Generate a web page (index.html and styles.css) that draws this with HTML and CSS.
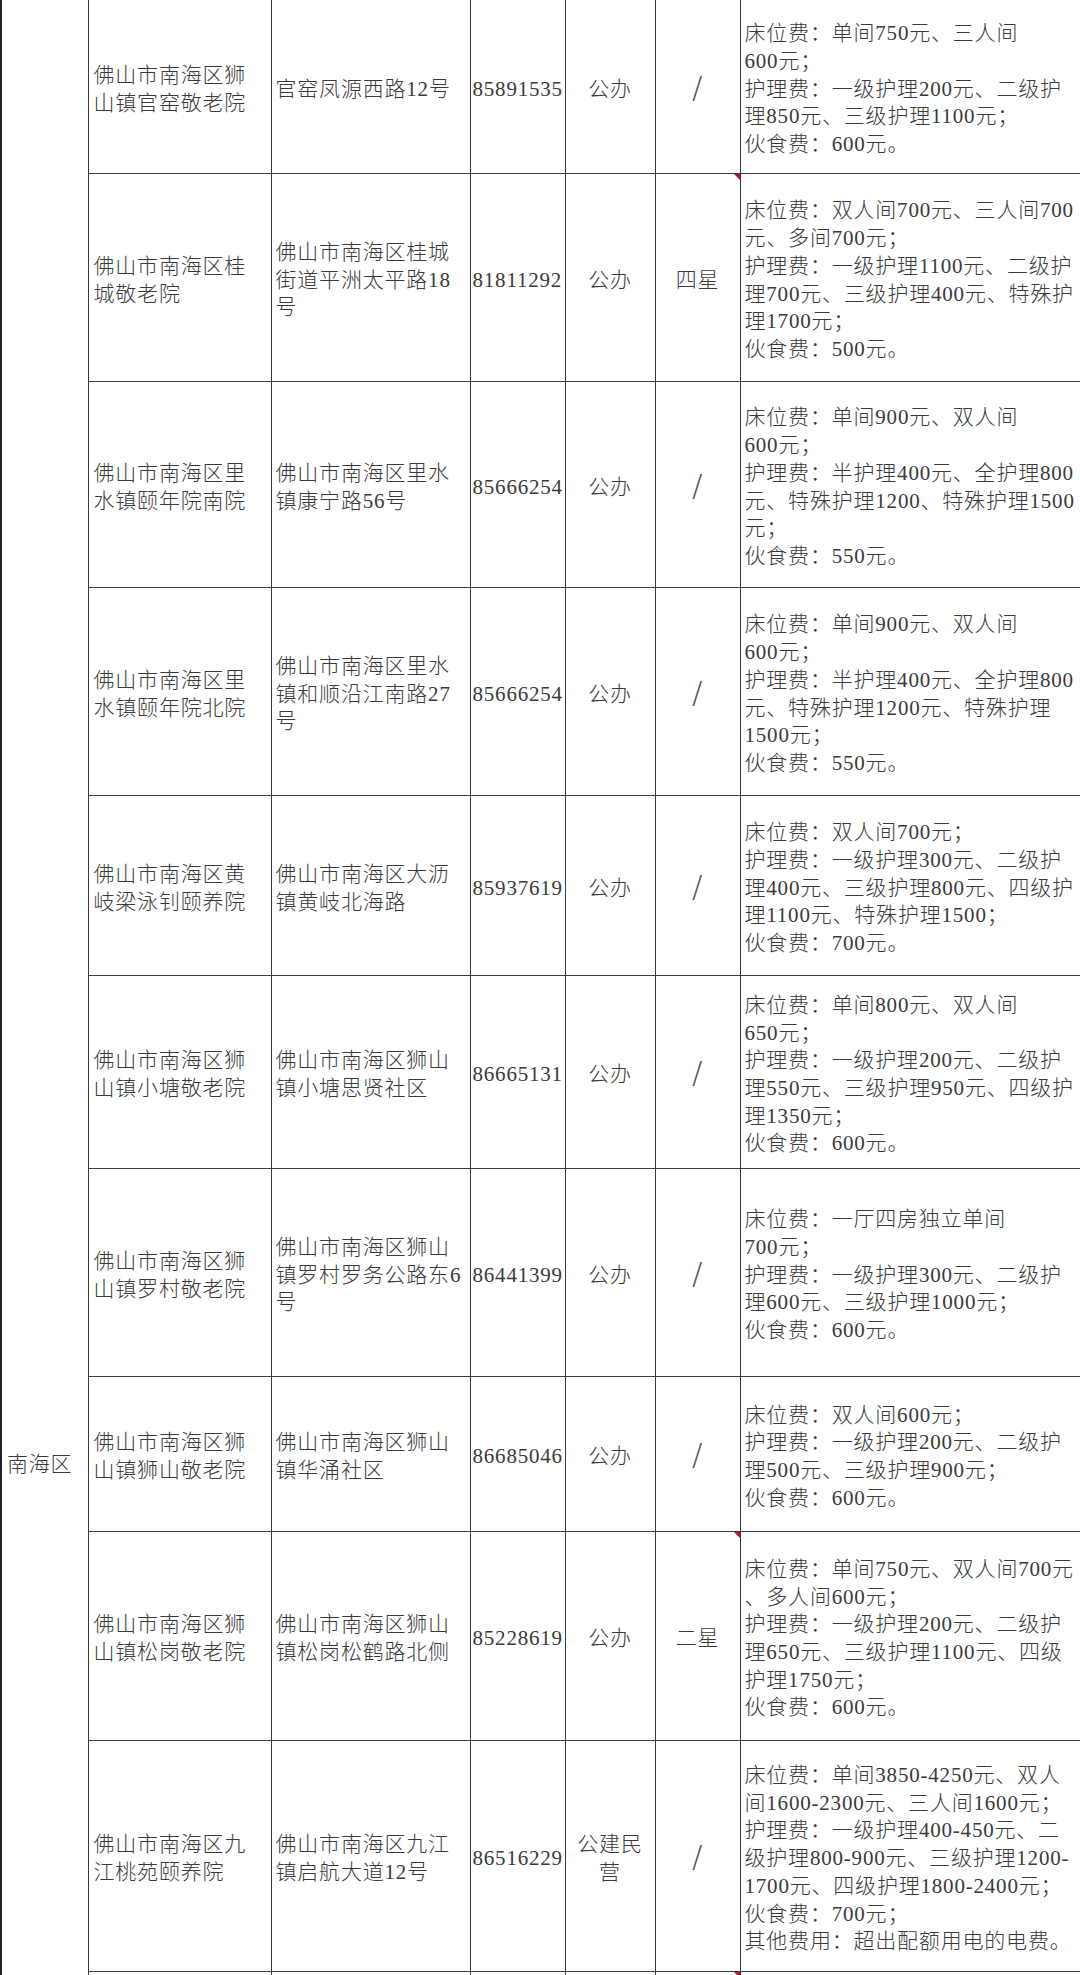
FILE: index.html
```html
<!DOCTYPE html>
<html lang="zh-CN">
<head>
<meta charset="utf-8">
<title>佛山市南海区养老机构收费表</title>
<link rel="stylesheet" href="styles.css">
</head>
<body>
<table class="fees">
  <colgroup>
    <col class="c-dist"><col class="c-name"><col class="c-addr"><col class="c-tel"><col class="c-type"><col class="c-star"><col class="c-fee">
  </colgroup>
  <tbody>
    <tr>
      <td class="dist" rowspan="11">南海区</td>
      <td class="name">佛山市南海区狮<br>山镇官窑敬老院</td>
      <td class="addr">官窑凤源西路12号</td>
      <td class="tel">85891535</td>
      <td class="type">公办</td>
      <td class="star"><span class="slash">/</span></td>
      <td class="fee">床位费：单间750元、三人间<br>600元；<br>护理费：一级护理200元、二级护<br>理850元、三级护理1100元；<br>伙食费：600元。</td>
    </tr>
    <tr>
      <td class="name">佛山市南海区桂<br>城敬老院</td>
      <td class="addr">佛山市南海区桂城<br>街道平洲太平路18<br>号</td>
      <td class="tel">81811292</td>
      <td class="type">公办</td>
      <td class="star mark">四星</td>
      <td class="fee">床位费：双人间700元、三人间700<br>元、多间700元；<br>护理费：一级护理1100元、二级护<br>理700元、三级护理400元、特殊护<br>理1700元；<br>伙食费：500元。</td>
    </tr>
    <tr>
      <td class="name">佛山市南海区里<br>水镇颐年院南院</td>
      <td class="addr">佛山市南海区里水<br>镇康宁路56号</td>
      <td class="tel">85666254</td>
      <td class="type">公办</td>
      <td class="star"><span class="slash">/</span></td>
      <td class="fee">床位费：单间900元、双人间<br>600元；<br>护理费：半护理400元、全护理800<br>元、特殊护理1200、特殊护理1500<br>元；<br>伙食费：550元。</td>
    </tr>
    <tr>
      <td class="name">佛山市南海区里<br>水镇颐年院北院</td>
      <td class="addr">佛山市南海区里水<br>镇和顺沿江南路27<br>号</td>
      <td class="tel">85666254</td>
      <td class="type">公办</td>
      <td class="star"><span class="slash">/</span></td>
      <td class="fee">床位费：单间900元、双人间<br>600元；<br>护理费：半护理400元、全护理800<br>元、特殊护理1200元、特殊护理<br>1500元；<br>伙食费：550元。</td>
    </tr>
    <tr>
      <td class="name">佛山市南海区黄<br>岐梁泳钊颐养院</td>
      <td class="addr">佛山市南海区大沥<br>镇黄岐北海路</td>
      <td class="tel">85937619</td>
      <td class="type">公办</td>
      <td class="star"><span class="slash">/</span></td>
      <td class="fee">床位费：双人间700元；<br>护理费：一级护理300元、二级护<br>理400元、三级护理800元、四级护<br>理1100元、特殊护理1500；<br>伙食费：700元。</td>
    </tr>
    <tr>
      <td class="name">佛山市南海区狮<br>山镇小塘敬老院</td>
      <td class="addr">佛山市南海区狮山<br>镇小塘思贤社区</td>
      <td class="tel">86665131</td>
      <td class="type">公办</td>
      <td class="star"><span class="slash">/</span></td>
      <td class="fee">床位费：单间800元、双人间<br>650元；<br>护理费：一级护理200元、二级护<br>理550元、三级护理950元、四级护<br>理1350元；<br>伙食费：600元。</td>
    </tr>
    <tr>
      <td class="name">佛山市南海区狮<br>山镇罗村敬老院</td>
      <td class="addr">佛山市南海区狮山<br>镇罗村罗务公路东6<br>号</td>
      <td class="tel">86441399</td>
      <td class="type">公办</td>
      <td class="star"><span class="slash">/</span></td>
      <td class="fee">床位费：一厅四房独立单间<br>700元；<br>护理费：一级护理300元、二级护<br>理600元、三级护理1000元；<br>伙食费：600元。</td>
    </tr>
    <tr>
      <td class="name">佛山市南海区狮<br>山镇狮山敬老院</td>
      <td class="addr">佛山市南海区狮山<br>镇华涌社区</td>
      <td class="tel">86685046</td>
      <td class="type">公办</td>
      <td class="star"><span class="slash">/</span></td>
      <td class="fee">床位费：双人间600元；<br>护理费：一级护理200元、二级护<br>理500元、三级护理900元；<br>伙食费：600元。</td>
    </tr>
    <tr>
      <td class="name">佛山市南海区狮<br>山镇松岗敬老院</td>
      <td class="addr">佛山市南海区狮山<br>镇松岗松鹤路北侧</td>
      <td class="tel">85228619</td>
      <td class="type">公办</td>
      <td class="star mark">二星</td>
      <td class="fee">床位费：单间750元、双人间700元<br>、多人间600元；<br>护理费：一级护理200元、二级护<br>理650元、三级护理1100元、四级<br>护理1750元；<br>伙食费：600元。</td>
    </tr>
    <tr>
      <td class="name">佛山市南海区九<br>江桃苑颐养院</td>
      <td class="addr">佛山市南海区九江<br>镇启航大道12号</td>
      <td class="tel">86516229</td>
      <td class="type">公建民<br>营</td>
      <td class="star"><span class="slash">/</span></td>
      <td class="fee">床位费：单间3850-4250元、双人<br>间1600-2300元、三人间1600元；<br>护理费：一级护理400-450元、二<br>级护理800-900元、三级护理1200-<br>1700元、四级护理1800-2400元；<br>伙食费：700元；<br>其他费用：超出配额用电的电费。</td>
    </tr>
    <tr>
      <td class="name"></td>
      <td class="addr"></td>
      <td class="tel"></td>
      <td class="type"></td>
      <td class="star mark"></td>
      <td class="fee"></td>
    </tr>
  </tbody>
</table>
</body>
</html>
```

FILE: styles.css
```css
html, body {
  margin: 0;
  padding: 0;
  background: #ffffff;
}

body {
  font-family: "Liberation Serif", "Noto Sans CJK SC", serif;
  font-size: 21px;
  font-weight: 300;
  letter-spacing: 0.8px;
  color: #3a3a3a;
}

.fees {
  border-collapse: collapse;
  table-layout: fixed;
  width: 1079px;
  margin-top: -1px;
  border-left: 2px solid #222222;
}

.c-dist { width: 87px; }
.c-name { width: 183px; }
.c-addr { width: 199px; }
.c-tel  { width: 95px; }
.c-type { width: 90px; }
.c-star { width: 85px; }
.c-fee  { width: 340px; }

.fees td {
  border: 1px solid #3a3a3a;
  padding: 6px 2px 0 4px;
  line-height: 27.7px;
  vertical-align: middle;
  white-space: nowrap;
  overflow: hidden;
  text-align: left;
  position: relative;
}

.fees tr:nth-child(1)  { height: 174px; }
.fees tr:nth-child(2)  { height: 208px; }
.fees tr:nth-child(3)  { height: 206px; }
.fees tr:nth-child(4)  { height: 208px; }
.fees tr:nth-child(5)  { height: 180px; }
.fees tr:nth-child(6)  { height: 193px; }
.fees tr:nth-child(7)  { height: 208px; }
.fees tr:nth-child(8)  { height: 155px; }
.fees tr:nth-child(9)  { height: 209px; }
.fees tr:nth-child(10) { height: 231px; }
.fees tr:nth-child(11) { height: 30px; }

.fees td.dist {
  vertical-align: top;
  padding: 1451px 0 0 5px;
  border-left: 2px solid #222222;
}

.fees td.name { padding-left: 5px; }
.fees td.addr { padding-left: 4px; }
.fees td.tel { padding-left: 2px; padding-right: 0; }

.fees td.type,
.fees td.star {
  text-align: center;
  padding-left: 2px;
  padding-right: 2px;
}

.fees td.fee { padding-left: 4px; padding-right: 0; }

.slash {
  font-family: "DejaVu Sans", sans-serif;
  font-size: 31px;
  font-weight: 200;
  color: #555555;
  line-height: 27px;
  display: inline-block;
}

.fees td.mark::after {
  content: "";
  position: absolute;
  top: 0;
  right: 0;
  width: 0;
  height: 0;
  border-top: 6px solid #c0102a;
  border-left: 6px solid transparent;
}
```
